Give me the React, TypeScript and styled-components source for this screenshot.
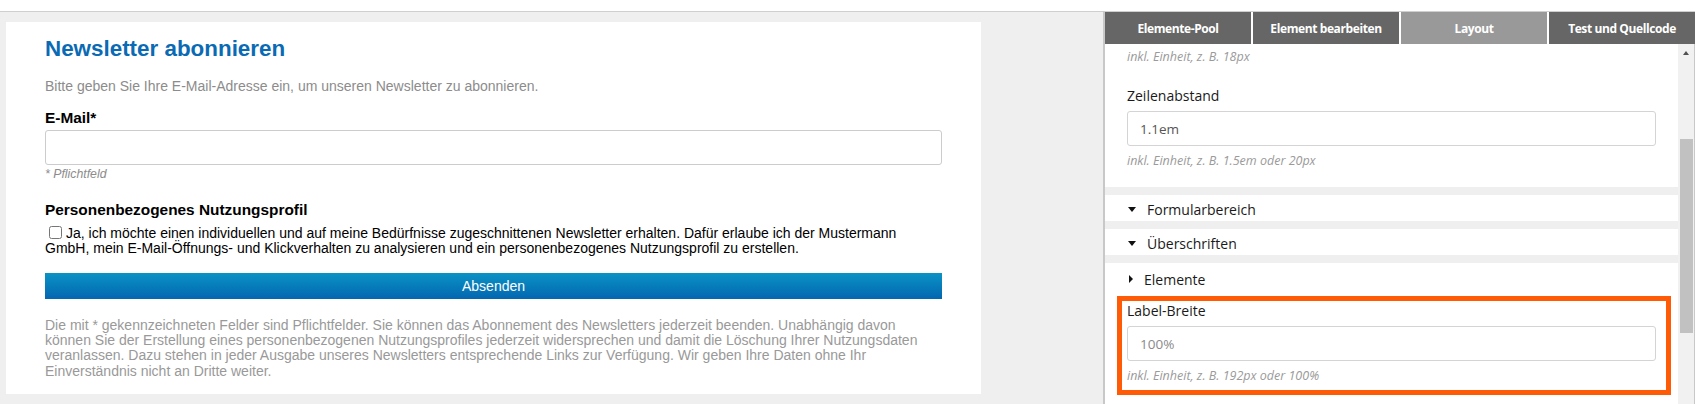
import React from "react";
import styled, { createGlobalStyle } from "styled-components";

const GlobalStyle = createGlobalStyle`
  html, body { margin: 0; padding: 0; background: #fff; }
  body { font-family: "Liberation Sans", Arial, sans-serif; overflow: hidden; }
  * { box-sizing: border-box; }
`;

const Page = styled.div`
  width: 1706px;
  height: 404px;
  display: flex;
  flex-direction: column;
  overflow: hidden;
  background: #fff;
`;

const TopStrip = styled.div`
  height: 11px;
  flex: none;
  background: #fff;
`;

const Workspace = styled.div`
  flex: 1;
  display: flex;
  min-height: 0;
`;

const Canvas = styled.div`
  width: 1103px;
  flex: none;
  background: #efefef;
  border-top: 1px solid #cfcfcf;
  padding: 10px 0 0 6px;
  overflow: hidden;
`;

const Card = styled.form`
  width: 975px;
  height: 372px;
  background: #fff;
  padding: 14px 39px 0;
  font-family: "Liberation Sans", Arial, sans-serif;
`;

const Title = styled.h1`
  margin: 0;
  font-size: 22.4px;
  line-height: 26px;
  font-weight: 700;
  color: #0a6ab4;
`;

const Intro = styled.p`
  margin: 14px 0 0;
  font-size: 14px;
  line-height: 20px;
  color: #8c8c8c;
`;

const FieldLabel = styled.label`
  display: block;
  margin: 12px 0 2px;
  font-size: 15.4px;
  line-height: 20px;
  font-weight: 700;
  color: #000;
`;

const TextInput = styled.input`
  display: block;
  width: 100%;
  height: 35px;
  margin: 0;
  border: 1px solid #cccccc;
  border-radius: 3px;
  background: #fff;
  outline: none;
`;

const Required = styled.div`
  margin-top: 2px;
  font-size: 12.3px;
  line-height: 14px;
  font-style: italic;
  color: #8c8c8c;
`;

const GroupTitle = styled.div`
  margin-top: 19px;
  font-size: 15.4px;
  line-height: 20px;
  font-weight: 700;
  color: #000;
`;

const Consent = styled.label`
  display: block;
  margin-top: 6px;
  font-size: 14px;
  line-height: 15px;
  color: #000;
`;

const Check = styled.input`
  width: 13px;
  height: 13px;
  margin: 0 4px 0 4px;
  vertical-align: top;
`;

const Submit = styled.button`
  display: block;
  width: 100%;
  height: 26px;
  margin-top: 17px;
  padding: 0;
  border: 0;
  background: linear-gradient(#0a93c4, #0366b1);
  color: #fff;
  font-family: "Liberation Sans", Arial, sans-serif;
  font-size: 14px;
  line-height: 26px;
`;

const Note = styled.p`
  margin: 19px 0 0;
  font-size: 14px;
  line-height: 15.2px;
  color: #999;
`;

const Panel = styled.aside`
  width: 592px;
  flex: none;
  border-left: 2px solid #c8c8c8;
  border-top: 1px solid #cfcfcf;
  display: flex;
  flex-direction: column;
  background: #fff;
  font-family: "Open Sans", sans-serif;
`;

const Tabs = styled.nav`
  display: grid;
  grid-template-columns: repeat(4, 1fr);
  column-gap: 2px;
  height: 32px;
  flex: none;
  background: #fff;
`;

const Tab = styled.div<{ $active?: boolean }>`
  display: flex;
  align-items: center;
  justify-content: center;
  background: ${(p) => (p.$active ? "#999999" : "#666666")};
  color: #fff;
  font-size: 12px;
  font-weight: 700;
  letter-spacing: -0.4px;
`;

const PanelBody = styled.div`
  flex: 1;
  display: flex;
  min-height: 0;
`;

const Scroller = styled.div`
  width: 573px;
  flex: none;
  display: flex;
  flex-direction: column;
  gap: 8px;
  background: #efefef;
  overflow: hidden;
`;

const Section = styled.section`
  flex: none;
  background: #fff;
  padding: 5px 22px 18px;
`;

const Hint = styled.div`
  font-size: 12.5px;
  line-height: 16px;
  font-style: italic;
  color: #9a9a9a;
`;

const Field = styled.div<{ $gap: number; $highlight?: boolean }>`
  position: relative;
  margin-top: ${(p) => p.$gap}px;

  ${(p) =>
    p.$highlight &&
    `
    &::after {
      content: "";
      position: absolute;
      top: -5px;
      left: -10px;
      right: -15px;
      bottom: -11px;
      border: 5px solid #ff5a05;
      pointer-events: none;
    }
  `}
`;

const PanelLabel = styled.div`
  font-size: 14px;
  line-height: 20px;
  color: #1a1a1a;
  margin-bottom: 5px;
`;

const PanelInput = styled.div<{ $muted?: boolean }>`
  height: 35px;
  border: 1px solid #d4d4d4;
  border-radius: 3px;
  padding: 0 12px;
  display: flex;
  align-items: center;
  font-size: 13.5px;
  color: ${(p) => (p.$muted ? "#8a8a8a" : "#555")};
`;

const PanelHint = styled(Hint)`
  margin-top: 7px;
`;

const Row = styled.div<{ $offset?: number }>`
  flex: none;
  height: 26px;
  display: flex;
  align-items: center;
  padding: 2px 22px 0;
  margin-top: ${(p) => p.$offset ?? 0}px;
  background: #fff;
  font-size: 14px;
  color: #1a1a1a;
`;

const Caret = styled.span<{ $open: boolean }>`
  display: inline-block;
  width: 0;
  height: 0;
  flex: none;
  ${(p) =>
    p.$open
      ? `
    margin: 0 11px 0 1px;
    border-left: 4px solid transparent;
    border-right: 4px solid transparent;
    border-top: 5px solid #111;
  `
      : `
    margin: 0 11px 0 2px;
    border-top: 4px solid transparent;
    border-bottom: 4px solid transparent;
    border-left: 4px solid #111;
  `}
`;

const ElementsSection = styled.section`
  flex: 1;
  background: #fff;
`;

const FieldArea = styled.div`
  padding: 0 22px;
`;

const Scrollbar = styled.div`
  width: 17px;
  flex: none;
  background: #f1f1f1;
  border-right: 1px solid #c8c8c8;
  display: flex;
  flex-direction: column;
  align-items: center;
`;

const ScrollArrow = styled.div`
  height: 17px;
  flex: none;
  display: flex;
  align-items: center;
  justify-content: center;

  &::before {
    content: "";
    border-left: 3.5px solid transparent;
    border-right: 3.5px solid transparent;
    border-bottom: 4px solid #505050;
  }
`;

const Thumb = styled.div`
  width: 13px;
  height: 194px;
  margin-top: 78px;
  margin-left: 1px;
  background: #c1c1c1;
`;

const Gutter = styled.div`
  flex: 1;
  background: #fff;
`;

export default function App() {
  return (
    <>
      <GlobalStyle />
      <Page>
        <TopStrip />
        <Workspace>
          <Canvas>
            <Card onSubmit={(e) => e.preventDefault()}>
              <Title>Newsletter abonnieren</Title>
              <Intro>Bitte geben Sie Ihre E-Mail-Adresse ein, um unseren Newsletter zu abonnieren.</Intro>
              <FieldLabel htmlFor="email">E-Mail*</FieldLabel>
              <TextInput id="email" type="text" />
              <Required>* Pflichtfeld</Required>
              <GroupTitle>Personenbezogenes Nutzungsprofil</GroupTitle>
              <Consent>
                <Check type="checkbox" />
                Ja, ich möchte einen individuellen und auf meine Bedürfnisse zugeschnittenen Newsletter erhalten. Dafür
                erlaube ich der Mustermann GmbH, mein E-Mail-Öffnungs- und Klickverhalten zu analysieren und ein
                personenbezogenes Nutzungsprofil zu erstellen.
              </Consent>
              <Submit type="submit">Absenden</Submit>
              <Note>
                Die mit * gekennzeichneten Felder sind Pflichtfelder. Sie können das Abonnement des Newsletters
                jederzeit beenden. Unabhängig davon können Sie der Erstellung eines personenbezogenen Nutzungsprofiles
                jederzeit widersprechen und damit die Löschung Ihrer Nutzungsdaten veranlassen. Dazu stehen in jeder
                Ausgabe unseres Newsletters entsprechende Links zur Verfügung. Wir geben Ihre Daten ohne Ihr
                Einverständnis nicht an Dritte weiter.
              </Note>
            </Card>
          </Canvas>
          <Panel>
            <Tabs>
              <Tab>Elemente-Pool</Tab>
              <Tab>Element bearbeiten</Tab>
              <Tab $active>Layout</Tab>
              <Tab>Test und Quellcode</Tab>
            </Tabs>
            <PanelBody>
              <Scroller>
                <Section>
                  <Hint>inkl. Einheit, z. B. 18px</Hint>
                  <Field $gap={21}>
                    <PanelLabel>Zeilenabstand</PanelLabel>
                    <PanelInput>1.1em</PanelInput>
                    <PanelHint>inkl. Einheit, z. B. 1.5em oder 20px</PanelHint>
                  </Field>
                </Section>
                <Row>
                  <Caret $open />
                  Formularbereich
                </Row>
                <Row>
                  <Caret $open />
                  Überschriften
                </Row>
                <ElementsSection>
                  <Row $offset={2}>
                    <Caret $open={false} />
                    Elemente
                  </Row>
                  <FieldArea>
                    <Field $gap={10} $highlight>
                      <PanelLabel>Label-Breite</PanelLabel>
                      <PanelInput $muted>100%</PanelInput>
                      <PanelHint>inkl. Einheit, z. B. 192px oder 100%</PanelHint>
                    </Field>
                  </FieldArea>
                </ElementsSection>
              </Scroller>
              <Scrollbar>
                <ScrollArrow />
                <Thumb />
              </Scrollbar>
            </PanelBody>
          </Panel>
          <Gutter />
        </Workspace>
      </Page>
    </>
  );
}
